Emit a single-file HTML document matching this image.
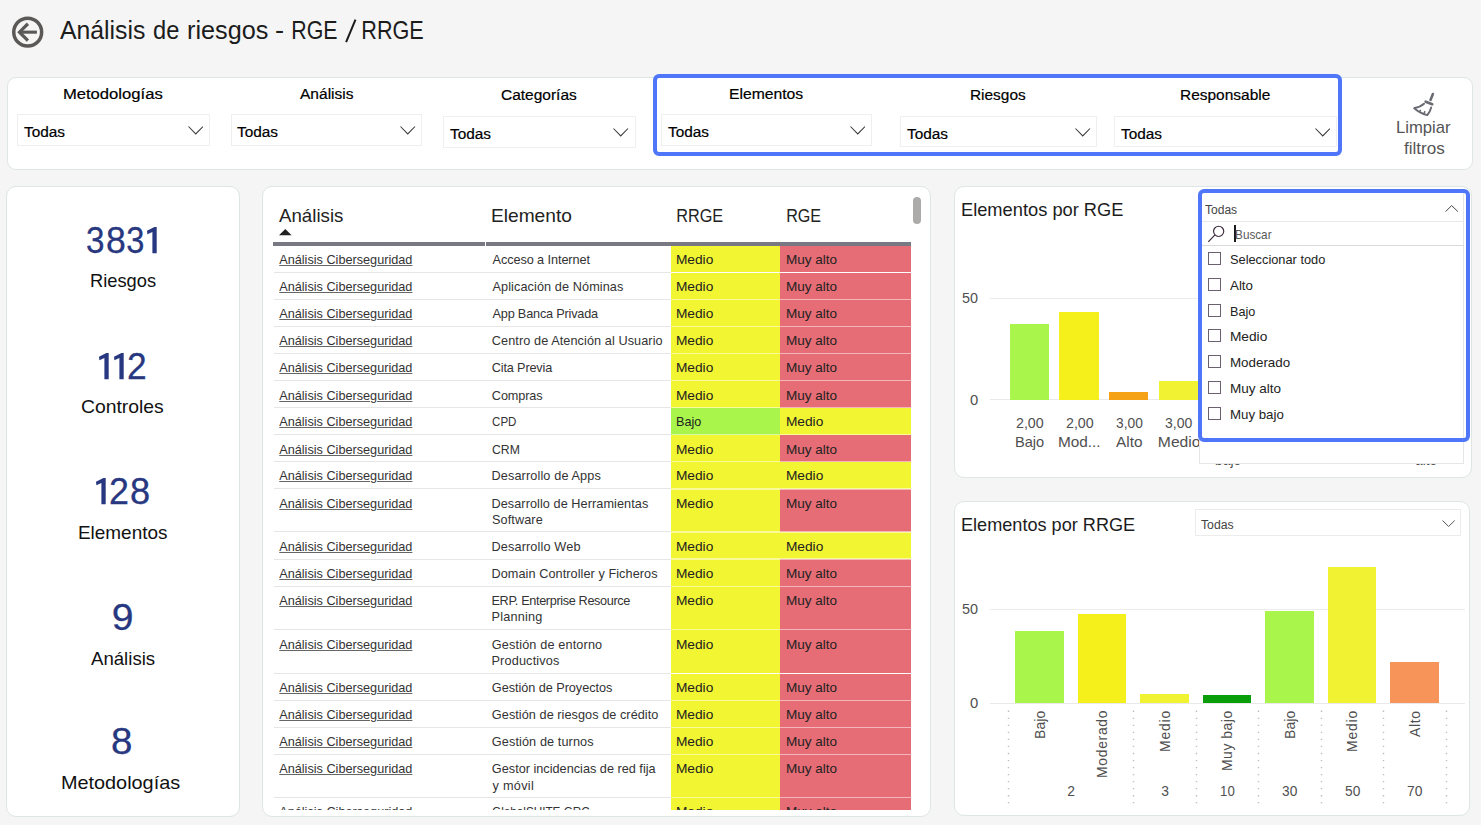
<!DOCTYPE html>
<html><head><meta charset="utf-8"><title>Análisis de riesgos</title>
<style>
html,body{margin:0;padding:0}
body{width:1481px;height:825px;overflow:hidden;background:#f5f5f5;font-family:"Liberation Sans",sans-serif;position:relative}
.t{position:absolute;line-height:1;white-space:nowrap}
.b{position:absolute;display:block}
</style></head><body>
<svg class="b" style="left:0px;top:0px" width="56" height="60" viewBox="0 0 56 60">
<circle cx="27.7" cy="32.15" r="13.95" fill="none" stroke="#5b5957" stroke-width="3.5"/>
<path d="M19.4 32.15H36.9" fill="none" stroke="#5b5957" stroke-width="3.1"/>
<path d="M27.9 23.75L19.5 32.15L27.9 40.55" fill="none" stroke="#5b5957" stroke-width="3.2" stroke-linejoin="miter"/>
</svg>
<span class="t" style="left:59.80px;top:18px;font-size:25.40px;color:#1c1c1c;transform-origin:0.00px 0;transform:scaleX(0.9756);">Análisis</span>
<span class="t" style="left:152.78px;top:18px;font-size:25.40px;color:#1c1c1c;transform-origin:1.02px 0;transform:scaleX(0.9327);">de</span>
<span class="t" style="left:186.75px;top:18px;font-size:25.40px;color:#1c1c1c;transform-origin:1.65px 0;transform:scaleX(0.9928);">riesgos</span>
<span class="t" style="left:275.36px;top:18px;font-size:25.40px;color:#1c1c1c;transform-origin:1.14px 0;transform:scaleX(1.0767);">-</span>
<span class="t" style="left:291.07px;top:18px;font-size:25.40px;color:#1c1c1c;transform-origin:2.03px 0;transform:scaleX(0.8413);">RGE</span>
<span class="t" style="left:360.87px;top:18px;font-size:25.40px;color:#1c1c1c;transform-origin:2.03px 0;transform:scaleX(0.8515);">RRGE</span>
<svg class="b" style="left:340px;top:15px" width="22" height="32"><line x1="6.1" y1="27.2" x2="15.5" y2="4.6" stroke="#1c1c1c" stroke-width="2"/></svg>
<div class="b" style="left:7.00px;top:77.00px;width:1466.00px;height:92.50px;background:#fff;border:1px solid #dde6e4;border-radius:9px;box-sizing:border-box"></div>
<span class="t" style="left:63.28px;top:86px;font-size:15.20px;color:#000;transform-origin:1.22px 0;transform:scaleX(1.0946);-webkit-text-stroke:0.2px #000;">Metodologías</span>
<span class="t" style="left:300.00px;top:86px;font-size:15.20px;color:#000;transform-origin:0.00px 0;transform:scaleX(1.0225);-webkit-text-stroke:0.2px #000;">Análisis</span>
<span class="t" style="left:501.24px;top:87px;font-size:15.20px;color:#000;transform-origin:0.76px 0;transform:scaleX(1.0200);-webkit-text-stroke:0.2px #000;">Categorías</span>
<span class="t" style="left:728.78px;top:86px;font-size:15.20px;color:#000;transform-origin:1.22px 0;transform:scaleX(1.0347);-webkit-text-stroke:0.2px #000;">Elementos</span>
<span class="t" style="left:969.78px;top:87px;font-size:15.20px;color:#000;transform-origin:1.22px 0;transform:scaleX(1.0150);-webkit-text-stroke:0.2px #000;">Riesgos</span>
<span class="t" style="left:1179.78px;top:87px;font-size:15.20px;color:#000;transform-origin:1.22px 0;transform:scaleX(1.0188);-webkit-text-stroke:0.2px #000;">Responsable</span>
<div class="b" style="left:17.00px;top:114.00px;width:192.50px;height:31.50px;border:1px solid #efefef;box-sizing:border-box;background:#fff"></div>
<span class="t" style="left:23.95px;top:124px;font-size:15.20px;color:#000;transform-origin:0.30px 0;transform:scaleX(1.0126);-webkit-text-stroke:0.2px #000;">Todas</span>
<svg class="b" style="left:187.50px;top:126.00px" width="15.50" height="8.50"><polyline points="0.5,0.5 7.75,7.90 15.00,0.5" fill="none" stroke="#3a3a3a" stroke-width="1.05"/></svg>
<div class="b" style="left:230.50px;top:114.00px;width:191.50px;height:31.50px;border:1px solid #efefef;box-sizing:border-box;background:#fff"></div>
<span class="t" style="left:237.20px;top:124px;font-size:15.20px;color:#000;transform-origin:0.30px 0;transform:scaleX(1.0126);-webkit-text-stroke:0.2px #000;">Todas</span>
<svg class="b" style="left:400.00px;top:126.00px" width="15.50" height="8.50"><polyline points="0.5,0.5 7.75,7.90 15.00,0.5" fill="none" stroke="#3a3a3a" stroke-width="1.05"/></svg>
<div class="b" style="left:443.25px;top:115.50px;width:192.25px;height:32.00px;border:1px solid #efefef;box-sizing:border-box;background:#fff"></div>
<span class="t" style="left:450.20px;top:126px;font-size:15.20px;color:#000;transform-origin:0.30px 0;transform:scaleX(1.0126);-webkit-text-stroke:0.2px #000;">Todas</span>
<svg class="b" style="left:613.00px;top:128.00px" width="15.50" height="8.50"><polyline points="0.5,0.5 7.75,7.90 15.00,0.5" fill="none" stroke="#3a3a3a" stroke-width="1.05"/></svg>
<div class="b" style="left:661.25px;top:114.00px;width:210.75px;height:31.50px;border:1px solid #efefef;box-sizing:border-box;background:#fff"></div>
<span class="t" style="left:667.70px;top:124px;font-size:15.20px;color:#000;transform-origin:0.30px 0;transform:scaleX(1.0126);-webkit-text-stroke:0.2px #000;">Todas</span>
<svg class="b" style="left:849.50px;top:126.00px" width="15.50" height="8.50"><polyline points="0.5,0.5 7.75,7.90 15.00,0.5" fill="none" stroke="#3a3a3a" stroke-width="1.05"/></svg>
<div class="b" style="left:899.50px;top:115.50px;width:197.25px;height:31.50px;border:1px solid #efefef;box-sizing:border-box;background:#fff"></div>
<span class="t" style="left:906.70px;top:126px;font-size:15.20px;color:#000;transform-origin:0.30px 0;transform:scaleX(1.0126);-webkit-text-stroke:0.2px #000;">Todas</span>
<svg class="b" style="left:1075.00px;top:128.00px" width="15.50" height="8.50"><polyline points="0.5,0.5 7.75,7.90 15.00,0.5" fill="none" stroke="#3a3a3a" stroke-width="1.05"/></svg>
<div class="b" style="left:1114.25px;top:115.50px;width:222.25px;height:31.50px;border:1px solid #efefef;box-sizing:border-box;background:#fff"></div>
<span class="t" style="left:1120.70px;top:126px;font-size:15.20px;color:#000;transform-origin:0.30px 0;transform:scaleX(1.0126);-webkit-text-stroke:0.2px #000;">Todas</span>
<svg class="b" style="left:1314.50px;top:128.00px" width="15.50" height="8.50"><polyline points="0.5,0.5 7.75,7.90 15.00,0.5" fill="none" stroke="#3a3a3a" stroke-width="1.05"/></svg>
<div class="b" style="left:652.50px;top:73.50px;width:689.00px;height:82.00px;border:4px solid #4f76f9;border-radius:6px;box-sizing:border-box"></div>
<span class="t" style="left:1396.34px;top:120px;font-size:15.70px;color:#555;transform-origin:1.26px 0;transform:scaleX(1.0619);">Limpiar</span>
<span class="t" style="left:1403.76px;top:141px;font-size:15.70px;color:#555;transform-origin:0.24px 0;transform:scaleX(1.0888);">filtros</span>
<svg class="b" style="left:1405px;top:86px" width="40" height="36" viewBox="0 0 40 36">
<g fill="none" stroke="#6a6a73" stroke-linecap="round" stroke-linejoin="round">
<path d="M27.9 8.0L25.5 13.9" stroke-width="2.6"/>
<path d="M20.7 15.7L27.2 18.2" stroke-width="2.7"/>
<path d="M19.0 17.7Q15.6 20.9 9.6 22.0" stroke-width="2.0"/>
<path d="M9.3 22.3Q14.6 27.3 22.3 29.2Q25.1 25.6 26.2 21.4" stroke-width="1.9"/>
<path d="M15.4 24.3L14.5 25.7M19.8 25.6L19.0 27.6" stroke-width="1.5"/>
</g></svg>
<div class="b" style="left:6.00px;top:186.00px;width:234.00px;height:630.50px;background:#fff;border:1px solid #dde6e4;border-radius:10px;box-sizing:border-box"></div>
<span class="t" style="left:85.75px;top:223px;font-size:36.30px;color:#283880;-webkit-text-stroke:0.3px #283880;transform-origin:1.45px 0;transform:scaleX(0.9163)">3</span>
<span class="t" style="left:105.55px;top:223px;font-size:36.30px;color:#283880;-webkit-text-stroke:0.3px #283880;transform-origin:1.45px 0;transform:scaleX(0.9801)">8</span>
<span class="t" style="left:125.95px;top:223px;font-size:36.30px;color:#283880;-webkit-text-stroke:0.3px #283880;transform-origin:1.45px 0;transform:scaleX(0.8989)">3</span>
<svg class="b" style="left:146.60px;top:226.65px" width="11" height="27"><polygon points="9.70,0.00 7.40,0.00 0.00,3.75 0.40,7.30 5.40,5.00 5.40,26.15 9.70,26.15" fill="#283880"/></svg>
<span class="t" style="left:89.51px;top:272px;font-size:18.60px;color:#111;transform-origin:1.49px 0;transform:scaleX(0.9831);">Riesgos</span>
<svg class="b" style="left:99.20px;top:352.75px" width="11" height="27"><polygon points="9.70,0.00 7.40,0.00 0.00,3.75 0.40,7.30 5.40,5.00 5.40,26.15 9.70,26.15" fill="#283880"/></svg>
<svg class="b" style="left:113.90px;top:352.75px" width="11" height="27"><polygon points="9.70,0.00 7.40,0.00 0.00,3.75 0.40,7.30 5.40,5.00 5.40,26.15 9.70,26.15" fill="#283880"/></svg>
<span class="t" style="left:127.28px;top:349px;font-size:36.30px;color:#283880;-webkit-text-stroke:0.3px #283880;transform-origin:1.81px 0;transform:scaleX(0.9748)">2</span>
<span class="t" style="left:81.47px;top:398px;font-size:18.60px;color:#111;transform-origin:0.93px 0;transform:scaleX(1.0407);">Controles</span>
<svg class="b" style="left:96.40px;top:478.25px" width="11" height="27"><polygon points="9.70,0.00 7.40,0.00 0.00,3.75 0.40,7.30 5.40,5.00 5.40,26.15 9.70,26.15" fill="#283880"/></svg>
<span class="t" style="left:109.48px;top:474px;font-size:36.30px;color:#283880;-webkit-text-stroke:0.3px #283880;transform-origin:1.81px 0;transform:scaleX(0.9869)">2</span>
<span class="t" style="left:129.95px;top:474px;font-size:36.30px;color:#283880;-webkit-text-stroke:0.3px #283880;transform-origin:1.45px 0;transform:scaleX(0.9975)">8</span>
<span class="t" style="left:77.91px;top:524px;font-size:18.60px;color:#111;transform-origin:1.49px 0;transform:scaleX(1.0181);">Elementos</span>
<span class="t" style="left:111.97px;top:600px;font-size:36.30px;color:#283880;-webkit-text-stroke:0.3px #283880;transform-origin:1.63px 0;transform:scaleX(1.0782)">9</span>
<span class="t" style="left:91.00px;top:650px;font-size:18.60px;color:#111;transform-origin:0.00px 0;transform:scaleX(1.0012);">Análisis</span>
<span class="t" style="left:110.55px;top:724px;font-size:36.30px;color:#283880;-webkit-text-stroke:0.3px #283880;transform-origin:1.45px 0;transform:scaleX(1.0613)">8</span>
<span class="t" style="left:61.21px;top:774px;font-size:18.60px;color:#111;transform-origin:1.49px 0;transform:scaleX(1.0680);">Metodologías</span>
<div class="b" style="left:261.50px;top:186.00px;width:669.50px;height:631.20px;background:#fff;border:1px solid #dde6e4;border-radius:10px;box-sizing:border-box"></div>
<span class="t" style="left:279.25px;top:207px;font-size:18.20px;color:#222;transform-origin:0.00px 0;transform:scaleX(1.0272);">Análisis</span>
<span class="t" style="left:491.04px;top:207px;font-size:18.20px;color:#222;transform-origin:1.46px 0;transform:scaleX(1.0541);">Elemento</span>
<span class="t" style="left:675.54px;top:207px;font-size:18.20px;color:#222;transform-origin:1.46px 0;transform:scaleX(0.8942);">RRGE</span>
<span class="t" style="left:786.04px;top:207px;font-size:18.20px;color:#222;transform-origin:1.46px 0;transform:scaleX(0.8866);">RGE</span>
<svg class="b" style="left:279px;top:228.5px" width="13" height="7"><polygon points="0,6.3 6.3,0 12.6,6.3" fill="#222"/></svg>
<div class="b" style="left:273.25px;top:242.40px;width:211.75px;height:3.40px;background:#797984"></div>
<div class="b" style="left:485.70px;top:242.40px;width:425.55px;height:3.40px;background:#797984"></div>
<div class="b" style="left:913.40px;top:197.00px;width:7.80px;height:27.25px;background:#acabaa;border-radius:4px"></div>
<div class="b" style="left:262px;top:0;width:669px;height:810px;overflow:hidden">
<div class="b" style="left:408.75px;top:245.80px;width:109.45px;height:26.70px;background:#f2f531"></div>
<div class="b" style="left:518.20px;top:245.80px;width:131.05px;height:26.70px;background:#e66c75"></div>
<span class="t" style="left:17.25px;top:254px;font-size:12.70px;color:#333;letter-spacing:-0.007px;text-decoration:underline;text-underline-offset:1px;text-decoration-thickness:1px;text-decoration-color:#666;text-decoration-skip-ink:auto;">Análisis Ciberseguridad</span>
<span class="t" style="left:230.50px;top:254px;font-size:12.70px;color:#333;letter-spacing:-0.078px;">Acceso a Internet</span>
<span class="t" style="left:414.23px;top:254px;font-size:12.70px;color:#222;transform-origin:1.02px 0;transform:scaleX(1.0806);">Medio</span>
<span class="t" style="left:524.23px;top:254px;font-size:12.70px;color:#222;transform-origin:1.02px 0;transform:scaleX(1.0649);">Muy alto</span>
<div class="b" style="left:408.75px;top:272.50px;width:109.45px;height:27.00px;background:#f2f531"></div>
<div class="b" style="left:518.20px;top:272.50px;width:131.05px;height:27.00px;background:#e66c75"></div>
<div class="b" style="left:12.00px;top:272.00px;width:396.75px;height:1.00px;background:#e6e6e6"></div>
<div class="b" style="left:408.75px;top:271.80px;width:240.50px;height:1.40px;background:rgba(255,255,255,0.5)"></div>
<span class="t" style="left:17.25px;top:281px;font-size:12.70px;color:#333;letter-spacing:-0.007px;text-decoration:underline;text-underline-offset:1px;text-decoration-thickness:1px;text-decoration-color:#666;text-decoration-skip-ink:auto;">Análisis Ciberseguridad</span>
<span class="t" style="left:230.50px;top:281px;font-size:12.70px;color:#333;letter-spacing:0.089px;">Aplicación de Nóminas</span>
<span class="t" style="left:414.23px;top:281px;font-size:12.70px;color:#222;transform-origin:1.02px 0;transform:scaleX(1.0806);">Medio</span>
<span class="t" style="left:524.23px;top:281px;font-size:12.70px;color:#222;transform-origin:1.02px 0;transform:scaleX(1.0649);">Muy alto</span>
<div class="b" style="left:408.75px;top:299.50px;width:109.45px;height:27.10px;background:#f2f531"></div>
<div class="b" style="left:518.20px;top:299.50px;width:131.05px;height:27.10px;background:#e66c75"></div>
<div class="b" style="left:12.00px;top:299.00px;width:396.75px;height:1.00px;background:#e6e6e6"></div>
<div class="b" style="left:408.75px;top:298.80px;width:240.50px;height:1.40px;background:rgba(255,255,255,0.5)"></div>
<span class="t" style="left:17.25px;top:308px;font-size:12.70px;color:#333;letter-spacing:-0.007px;text-decoration:underline;text-underline-offset:1px;text-decoration-thickness:1px;text-decoration-color:#666;text-decoration-skip-ink:auto;">Análisis Ciberseguridad</span>
<span class="t" style="left:230.50px;top:308px;font-size:12.70px;color:#333;letter-spacing:-0.185px;">App Banca Privada</span>
<span class="t" style="left:414.23px;top:308px;font-size:12.70px;color:#222;transform-origin:1.02px 0;transform:scaleX(1.0806);">Medio</span>
<span class="t" style="left:524.23px;top:308px;font-size:12.70px;color:#222;transform-origin:1.02px 0;transform:scaleX(1.0649);">Muy alto</span>
<div class="b" style="left:408.75px;top:326.60px;width:109.45px;height:27.00px;background:#f2f531"></div>
<div class="b" style="left:518.20px;top:326.60px;width:131.05px;height:27.00px;background:#e66c75"></div>
<div class="b" style="left:12.00px;top:326.10px;width:396.75px;height:1.00px;background:#e6e6e6"></div>
<div class="b" style="left:408.75px;top:325.90px;width:240.50px;height:1.40px;background:rgba(255,255,255,0.5)"></div>
<span class="t" style="left:17.25px;top:335px;font-size:12.70px;color:#333;letter-spacing:-0.007px;text-decoration:underline;text-underline-offset:1px;text-decoration-thickness:1px;text-decoration-color:#666;text-decoration-skip-ink:auto;">Análisis Ciberseguridad</span>
<span class="t" style="left:229.87px;top:335px;font-size:12.70px;color:#333;letter-spacing:0.078px;">Centro de Atención al Usuario</span>
<span class="t" style="left:414.23px;top:335px;font-size:12.70px;color:#222;transform-origin:1.02px 0;transform:scaleX(1.0806);">Medio</span>
<span class="t" style="left:524.23px;top:335px;font-size:12.70px;color:#222;transform-origin:1.02px 0;transform:scaleX(1.0649);">Muy alto</span>
<div class="b" style="left:408.75px;top:353.60px;width:109.45px;height:27.10px;background:#f2f531"></div>
<div class="b" style="left:518.20px;top:353.60px;width:131.05px;height:27.10px;background:#e66c75"></div>
<div class="b" style="left:12.00px;top:353.10px;width:396.75px;height:1.00px;background:#e6e6e6"></div>
<div class="b" style="left:408.75px;top:352.90px;width:240.50px;height:1.40px;background:rgba(255,255,255,0.5)"></div>
<span class="t" style="left:17.25px;top:362px;font-size:12.70px;color:#333;letter-spacing:-0.007px;text-decoration:underline;text-underline-offset:1px;text-decoration-thickness:1px;text-decoration-color:#666;text-decoration-skip-ink:auto;">Análisis Ciberseguridad</span>
<span class="t" style="left:229.87px;top:362px;font-size:12.70px;color:#333;letter-spacing:-0.172px;">Cita Previa</span>
<span class="t" style="left:414.23px;top:362px;font-size:12.70px;color:#222;transform-origin:1.02px 0;transform:scaleX(1.0806);">Medio</span>
<span class="t" style="left:524.23px;top:362px;font-size:12.70px;color:#222;transform-origin:1.02px 0;transform:scaleX(1.0649);">Muy alto</span>
<div class="b" style="left:408.75px;top:380.70px;width:109.45px;height:26.90px;background:#f2f531"></div>
<div class="b" style="left:518.20px;top:380.70px;width:131.05px;height:26.90px;background:#e66c75"></div>
<div class="b" style="left:12.00px;top:380.20px;width:396.75px;height:1.00px;background:#e6e6e6"></div>
<div class="b" style="left:408.75px;top:380.00px;width:240.50px;height:1.40px;background:rgba(255,255,255,0.5)"></div>
<span class="t" style="left:17.25px;top:390px;font-size:12.70px;color:#333;letter-spacing:-0.007px;text-decoration:underline;text-underline-offset:1px;text-decoration-thickness:1px;text-decoration-color:#666;text-decoration-skip-ink:auto;">Análisis Ciberseguridad</span>
<span class="t" style="left:229.87px;top:390px;font-size:12.70px;color:#333;letter-spacing:-0.112px;">Compras</span>
<span class="t" style="left:414.23px;top:390px;font-size:12.70px;color:#222;transform-origin:1.02px 0;transform:scaleX(1.0806);">Medio</span>
<span class="t" style="left:524.23px;top:390px;font-size:12.70px;color:#222;transform-origin:1.02px 0;transform:scaleX(1.0649);">Muy alto</span>
<div class="b" style="left:408.75px;top:407.60px;width:109.45px;height:27.20px;background:#a9f54c"></div>
<div class="b" style="left:518.20px;top:407.60px;width:131.05px;height:27.20px;background:#f2f531"></div>
<div class="b" style="left:12.00px;top:407.10px;width:396.75px;height:1.00px;background:#e6e6e6"></div>
<div class="b" style="left:408.75px;top:406.90px;width:240.50px;height:1.40px;background:rgba(255,255,255,0.5)"></div>
<span class="t" style="left:17.25px;top:416px;font-size:12.70px;color:#333;letter-spacing:-0.007px;text-decoration:underline;text-underline-offset:1px;text-decoration-thickness:1px;text-decoration-color:#666;text-decoration-skip-ink:auto;">Análisis Ciberseguridad</span>
<span class="t" style="left:229.87px;top:416px;font-size:12.70px;color:#333;transform-origin:0.64px 0;transform:scaleX(0.9085);">CPD</span>
<span class="t" style="left:414.23px;top:416px;font-size:12.70px;color:#222;transform-origin:1.02px 0;transform:scaleX(0.9947);">Bajo</span>
<span class="t" style="left:524.23px;top:416px;font-size:12.70px;color:#222;transform-origin:1.02px 0;transform:scaleX(1.0806);">Medio</span>
<div class="b" style="left:408.75px;top:434.80px;width:109.45px;height:27.00px;background:#f2f531"></div>
<div class="b" style="left:518.20px;top:434.80px;width:131.05px;height:27.00px;background:#e66c75"></div>
<div class="b" style="left:12.00px;top:434.30px;width:396.75px;height:1.00px;background:#e6e6e6"></div>
<div class="b" style="left:408.75px;top:434.10px;width:240.50px;height:1.40px;background:rgba(255,255,255,0.5)"></div>
<span class="t" style="left:17.25px;top:444px;font-size:12.70px;color:#333;letter-spacing:-0.007px;text-decoration:underline;text-underline-offset:1px;text-decoration-thickness:1px;text-decoration-color:#666;text-decoration-skip-ink:auto;">Análisis Ciberseguridad</span>
<span class="t" style="left:229.87px;top:444px;font-size:12.70px;color:#333;transform-origin:0.64px 0;transform:scaleX(0.9636);">CRM</span>
<span class="t" style="left:414.23px;top:444px;font-size:12.70px;color:#222;transform-origin:1.02px 0;transform:scaleX(1.0806);">Medio</span>
<span class="t" style="left:524.23px;top:444px;font-size:12.70px;color:#222;transform-origin:1.02px 0;transform:scaleX(1.0649);">Muy alto</span>
<div class="b" style="left:408.75px;top:461.80px;width:109.45px;height:27.10px;background:#f2f531"></div>
<div class="b" style="left:518.20px;top:461.80px;width:131.05px;height:27.10px;background:#f2f531"></div>
<div class="b" style="left:12.00px;top:461.30px;width:396.75px;height:1.00px;background:#e6e6e6"></div>
<div class="b" style="left:408.75px;top:461.10px;width:240.50px;height:1.40px;background:rgba(255,255,255,0.5)"></div>
<span class="t" style="left:17.25px;top:470px;font-size:12.70px;color:#333;letter-spacing:-0.007px;text-decoration:underline;text-underline-offset:1px;text-decoration-thickness:1px;text-decoration-color:#666;text-decoration-skip-ink:auto;">Análisis Ciberseguridad</span>
<span class="t" style="left:229.48px;top:470px;font-size:12.70px;color:#333;letter-spacing:0.126px;">Desarrollo de Apps</span>
<span class="t" style="left:414.23px;top:470px;font-size:12.70px;color:#222;transform-origin:1.02px 0;transform:scaleX(1.0806);">Medio</span>
<span class="t" style="left:524.23px;top:470px;font-size:12.70px;color:#222;transform-origin:1.02px 0;transform:scaleX(1.0806);">Medio</span>
<div class="b" style="left:408.75px;top:488.90px;width:109.45px;height:43.00px;background:#f2f531"></div>
<div class="b" style="left:518.20px;top:488.90px;width:131.05px;height:43.00px;background:#e66c75"></div>
<div class="b" style="left:12.00px;top:488.40px;width:396.75px;height:1.00px;background:#e6e6e6"></div>
<div class="b" style="left:408.75px;top:488.20px;width:240.50px;height:1.40px;background:rgba(255,255,255,0.5)"></div>
<span class="t" style="left:17.25px;top:498px;font-size:12.70px;color:#333;letter-spacing:-0.007px;text-decoration:underline;text-underline-offset:1px;text-decoration-thickness:1px;text-decoration-color:#666;text-decoration-skip-ink:auto;">Análisis Ciberseguridad</span>
<span class="t" style="left:229.48px;top:498px;font-size:12.70px;color:#333;letter-spacing:0.066px;">Desarrollo de Herramientas</span>
<span class="t" style="left:229.93px;top:514px;font-size:12.70px;color:#333;letter-spacing:0.104px;">Software</span>
<span class="t" style="left:414.23px;top:498px;font-size:12.70px;color:#222;transform-origin:1.02px 0;transform:scaleX(1.0806);">Medio</span>
<span class="t" style="left:524.23px;top:498px;font-size:12.70px;color:#222;transform-origin:1.02px 0;transform:scaleX(1.0649);">Muy alto</span>
<div class="b" style="left:408.75px;top:531.90px;width:109.45px;height:27.20px;background:#f2f531"></div>
<div class="b" style="left:518.20px;top:531.90px;width:131.05px;height:27.20px;background:#f2f531"></div>
<div class="b" style="left:12.00px;top:531.40px;width:396.75px;height:1.00px;background:#e6e6e6"></div>
<div class="b" style="left:408.75px;top:531.20px;width:240.50px;height:1.40px;background:rgba(255,255,255,0.5)"></div>
<span class="t" style="left:17.25px;top:541px;font-size:12.70px;color:#333;letter-spacing:-0.007px;text-decoration:underline;text-underline-offset:1px;text-decoration-thickness:1px;text-decoration-color:#666;text-decoration-skip-ink:auto;">Análisis Ciberseguridad</span>
<span class="t" style="left:229.48px;top:541px;font-size:12.70px;color:#333;letter-spacing:0.137px;">Desarrollo Web</span>
<span class="t" style="left:414.23px;top:541px;font-size:12.70px;color:#222;transform-origin:1.02px 0;transform:scaleX(1.0806);">Medio</span>
<span class="t" style="left:524.23px;top:541px;font-size:12.70px;color:#222;transform-origin:1.02px 0;transform:scaleX(1.0806);">Medio</span>
<div class="b" style="left:408.75px;top:559.10px;width:109.45px;height:27.20px;background:#f2f531"></div>
<div class="b" style="left:518.20px;top:559.10px;width:131.05px;height:27.20px;background:#e66c75"></div>
<div class="b" style="left:12.00px;top:558.60px;width:396.75px;height:1.00px;background:#e6e6e6"></div>
<div class="b" style="left:408.75px;top:558.40px;width:240.50px;height:1.40px;background:rgba(255,255,255,0.5)"></div>
<span class="t" style="left:17.25px;top:568px;font-size:12.70px;color:#333;letter-spacing:-0.007px;text-decoration:underline;text-underline-offset:1px;text-decoration-thickness:1px;text-decoration-color:#666;text-decoration-skip-ink:auto;">Análisis Ciberseguridad</span>
<span class="t" style="left:229.48px;top:568px;font-size:12.70px;color:#333;letter-spacing:0.065px;">Domain Controller y Ficheros</span>
<span class="t" style="left:414.23px;top:568px;font-size:12.70px;color:#222;transform-origin:1.02px 0;transform:scaleX(1.0806);">Medio</span>
<span class="t" style="left:524.23px;top:568px;font-size:12.70px;color:#222;transform-origin:1.02px 0;transform:scaleX(1.0649);">Muy alto</span>
<div class="b" style="left:408.75px;top:586.30px;width:109.45px;height:43.50px;background:#f2f531"></div>
<div class="b" style="left:518.20px;top:586.30px;width:131.05px;height:43.50px;background:#e66c75"></div>
<div class="b" style="left:12.00px;top:585.80px;width:396.75px;height:1.00px;background:#e6e6e6"></div>
<div class="b" style="left:408.75px;top:585.60px;width:240.50px;height:1.40px;background:rgba(255,255,255,0.5)"></div>
<span class="t" style="left:17.25px;top:595px;font-size:12.70px;color:#333;letter-spacing:-0.007px;text-decoration:underline;text-underline-offset:1px;text-decoration-thickness:1px;text-decoration-color:#666;text-decoration-skip-ink:auto;">Análisis Ciberseguridad</span>
<span class="t" style="left:229.48px;top:595px;font-size:12.70px;color:#333;letter-spacing:-0.358px;">ERP. Enterprise Resource</span>
<span class="t" style="left:229.48px;top:611px;font-size:12.70px;color:#333;letter-spacing:0.196px;">Planning</span>
<span class="t" style="left:414.23px;top:595px;font-size:12.70px;color:#222;transform-origin:1.02px 0;transform:scaleX(1.0806);">Medio</span>
<span class="t" style="left:524.23px;top:595px;font-size:12.70px;color:#222;transform-origin:1.02px 0;transform:scaleX(1.0649);">Muy alto</span>
<div class="b" style="left:408.75px;top:629.80px;width:109.45px;height:43.70px;background:#f2f531"></div>
<div class="b" style="left:518.20px;top:629.80px;width:131.05px;height:43.70px;background:#e66c75"></div>
<div class="b" style="left:12.00px;top:629.30px;width:396.75px;height:1.00px;background:#e6e6e6"></div>
<div class="b" style="left:408.75px;top:629.10px;width:240.50px;height:1.40px;background:rgba(255,255,255,0.5)"></div>
<span class="t" style="left:17.25px;top:639px;font-size:12.70px;color:#333;letter-spacing:-0.007px;text-decoration:underline;text-underline-offset:1px;text-decoration-thickness:1px;text-decoration-color:#666;text-decoration-skip-ink:auto;">Análisis Ciberseguridad</span>
<span class="t" style="left:229.87px;top:639px;font-size:12.70px;color:#333;letter-spacing:0.140px;">Gestión de entorno</span>
<span class="t" style="left:229.48px;top:655px;font-size:12.70px;color:#333;letter-spacing:0.160px;">Productivos</span>
<span class="t" style="left:414.23px;top:639px;font-size:12.70px;color:#222;transform-origin:1.02px 0;transform:scaleX(1.0806);">Medio</span>
<span class="t" style="left:524.23px;top:639px;font-size:12.70px;color:#222;transform-origin:1.02px 0;transform:scaleX(1.0649);">Muy alto</span>
<div class="b" style="left:408.75px;top:673.50px;width:109.45px;height:27.00px;background:#f2f531"></div>
<div class="b" style="left:518.20px;top:673.50px;width:131.05px;height:27.00px;background:#e66c75"></div>
<div class="b" style="left:12.00px;top:673.00px;width:396.75px;height:1.00px;background:#e6e6e6"></div>
<div class="b" style="left:408.75px;top:672.80px;width:240.50px;height:1.40px;background:rgba(255,255,255,0.5)"></div>
<span class="t" style="left:17.25px;top:682px;font-size:12.70px;color:#333;letter-spacing:-0.007px;text-decoration:underline;text-underline-offset:1px;text-decoration-thickness:1px;text-decoration-color:#666;text-decoration-skip-ink:auto;">Análisis Ciberseguridad</span>
<span class="t" style="left:229.87px;top:682px;font-size:12.70px;color:#333;letter-spacing:-0.044px;">Gestión de Proyectos</span>
<span class="t" style="left:414.23px;top:682px;font-size:12.70px;color:#222;transform-origin:1.02px 0;transform:scaleX(1.0806);">Medio</span>
<span class="t" style="left:524.23px;top:682px;font-size:12.70px;color:#222;transform-origin:1.02px 0;transform:scaleX(1.0649);">Muy alto</span>
<div class="b" style="left:408.75px;top:700.50px;width:109.45px;height:26.90px;background:#f2f531"></div>
<div class="b" style="left:518.20px;top:700.50px;width:131.05px;height:26.90px;background:#e66c75"></div>
<div class="b" style="left:12.00px;top:700.00px;width:396.75px;height:1.00px;background:#e6e6e6"></div>
<div class="b" style="left:408.75px;top:699.80px;width:240.50px;height:1.40px;background:rgba(255,255,255,0.5)"></div>
<span class="t" style="left:17.25px;top:709px;font-size:12.70px;color:#333;letter-spacing:-0.007px;text-decoration:underline;text-underline-offset:1px;text-decoration-thickness:1px;text-decoration-color:#666;text-decoration-skip-ink:auto;">Análisis Ciberseguridad</span>
<span class="t" style="left:229.87px;top:709px;font-size:12.70px;color:#333;letter-spacing:0.053px;">Gestión de riesgos de crédito</span>
<span class="t" style="left:414.23px;top:709px;font-size:12.70px;color:#222;transform-origin:1.02px 0;transform:scaleX(1.0806);">Medio</span>
<span class="t" style="left:524.23px;top:709px;font-size:12.70px;color:#222;transform-origin:1.02px 0;transform:scaleX(1.0649);">Muy alto</span>
<div class="b" style="left:408.75px;top:727.40px;width:109.45px;height:27.20px;background:#f2f531"></div>
<div class="b" style="left:518.20px;top:727.40px;width:131.05px;height:27.20px;background:#e66c75"></div>
<div class="b" style="left:12.00px;top:726.90px;width:396.75px;height:1.00px;background:#e6e6e6"></div>
<div class="b" style="left:408.75px;top:726.70px;width:240.50px;height:1.40px;background:rgba(255,255,255,0.5)"></div>
<span class="t" style="left:17.25px;top:736px;font-size:12.70px;color:#333;letter-spacing:-0.007px;text-decoration:underline;text-underline-offset:1px;text-decoration-thickness:1px;text-decoration-color:#666;text-decoration-skip-ink:auto;">Análisis Ciberseguridad</span>
<span class="t" style="left:229.87px;top:736px;font-size:12.70px;color:#333;letter-spacing:0.098px;">Gestión de turnos</span>
<span class="t" style="left:414.23px;top:736px;font-size:12.70px;color:#222;transform-origin:1.02px 0;transform:scaleX(1.0806);">Medio</span>
<span class="t" style="left:524.23px;top:736px;font-size:12.70px;color:#222;transform-origin:1.02px 0;transform:scaleX(1.0649);">Muy alto</span>
<div class="b" style="left:408.75px;top:754.60px;width:109.45px;height:43.10px;background:#f2f531"></div>
<div class="b" style="left:518.20px;top:754.60px;width:131.05px;height:43.10px;background:#e66c75"></div>
<div class="b" style="left:12.00px;top:754.10px;width:396.75px;height:1.00px;background:#e6e6e6"></div>
<div class="b" style="left:408.75px;top:753.90px;width:240.50px;height:1.40px;background:rgba(255,255,255,0.5)"></div>
<span class="t" style="left:17.25px;top:763px;font-size:12.70px;color:#333;letter-spacing:-0.007px;text-decoration:underline;text-underline-offset:1px;text-decoration-thickness:1px;text-decoration-color:#666;text-decoration-skip-ink:auto;">Análisis Ciberseguridad</span>
<span class="t" style="left:229.87px;top:763px;font-size:12.70px;color:#333;letter-spacing:0.004px;">Gestor incidencias de red fija</span>
<span class="t" style="left:230.50px;top:780px;font-size:12.70px;color:#333;letter-spacing:0.305px;">y móvil</span>
<span class="t" style="left:414.23px;top:763px;font-size:12.70px;color:#222;transform-origin:1.02px 0;transform:scaleX(1.0806);">Medio</span>
<span class="t" style="left:524.23px;top:763px;font-size:12.70px;color:#222;transform-origin:1.02px 0;transform:scaleX(1.0649);">Muy alto</span>
<div class="b" style="left:408.75px;top:797.70px;width:109.45px;height:27.00px;background:#f2f531"></div>
<div class="b" style="left:518.20px;top:797.70px;width:131.05px;height:27.00px;background:#e66c75"></div>
<div class="b" style="left:12.00px;top:797.20px;width:396.75px;height:1.00px;background:#e6e6e6"></div>
<div class="b" style="left:408.75px;top:797.00px;width:240.50px;height:1.40px;background:rgba(255,255,255,0.5)"></div>
<span class="t" style="left:17.25px;top:806px;font-size:12.70px;color:#333;letter-spacing:-0.007px;text-decoration:underline;text-underline-offset:1px;text-decoration-thickness:1px;text-decoration-color:#666;text-decoration-skip-ink:auto;">Análisis Ciberseguridad</span>
<span class="t" style="left:229.87px;top:806px;font-size:12.70px;color:#333;transform-origin:0.64px 0;transform:scaleX(0.9234);">GlobalSUITE GRC</span>
<span class="t" style="left:414.23px;top:806px;font-size:12.70px;color:#222;transform-origin:1.02px 0;transform:scaleX(1.0806);">Medio</span>
<span class="t" style="left:524.23px;top:806px;font-size:12.70px;color:#222;transform-origin:1.02px 0;transform:scaleX(1.0649);">Muy alto</span>
</div>
<div class="b" style="left:954.00px;top:186.00px;width:517.50px;height:291.50px;background:#fff;border:1px solid #dde6e4;border-radius:10px;box-sizing:border-box"></div>
<span class="t" style="left:961.38px;top:202px;font-size:17.70px;color:#1c1c1c;transform-origin:1.42px 0;transform:scaleX(1.0333);">Elementos por RGE</span>
<span class="t" style="left:962.24px;top:292px;font-size:13.90px;color:#505050;transform-origin:0.56px 0;transform:scaleX(1.0357);">50</span>
<span class="t" style="left:970.04px;top:394px;font-size:13.90px;color:#505050;transform-origin:0.56px 0;transform:scaleX(1.0641);">0</span>
<div class="b" style="left:989.70px;top:298.00px;width:208.30px;height:1.00px;background:#ececec"></div>
<div class="b" style="left:989.70px;top:399.30px;width:208.30px;height:1.00px;background:#e9e9e9"></div>
<div class="b" style="left:1009.80px;top:324.40px;width:39.20px;height:75.30px;background:#a9f54c"></div>
<div class="b" style="left:1059.40px;top:312.20px;width:39.40px;height:87.50px;background:#f5f01c"></div>
<div class="b" style="left:1109.20px;top:391.50px;width:39.20px;height:8.20px;background:#f5a216"></div>
<div class="b" style="left:1159.10px;top:381.30px;width:39.30px;height:18.40px;background:#f1f232"></div>
<span class="t" style="left:1015.80px;top:417px;font-size:13.90px;color:#505050;transform-origin:0.70px 0;transform:scaleX(1.0250);">2,00</span>
<span class="t" style="left:1014.89px;top:436px;font-size:13.90px;color:#505050;transform-origin:1.11px 0;transform:scaleX(1.0523);">Bajo</span>
<span class="t" style="left:1065.51px;top:417px;font-size:13.90px;color:#505050;transform-origin:0.70px 0;transform:scaleX(1.0250);">2,00</span>
<span class="t" style="left:1058.29px;top:436px;font-size:13.90px;color:#505050;transform-origin:1.11px 0;transform:scaleX(1.1053);">Mod...</span>
<span class="t" style="left:1115.64px;top:417px;font-size:13.90px;color:#505050;transform-origin:0.56px 0;transform:scaleX(0.9926);">3,00</span>
<span class="t" style="left:1116.20px;top:436px;font-size:13.90px;color:#505050;transform-origin:0.00px 0;transform:scaleX(1.1048);">Alto</span>
<span class="t" style="left:1165.24px;top:417px;font-size:13.90px;color:#505050;transform-origin:0.56px 0;transform:scaleX(1.0080);">3,00</span>
<span class="t" style="left:1157.94px;top:436px;font-size:13.90px;color:#505050;transform-origin:1.11px 0;transform:scaleX(1.1268);">Medio</span>
<span class="t" style="left:1215.10px;top:454px;font-size:13.90px;color:#505050;transform-origin:0.90px 0;transform:scaleX(0.9995);">bajo</span>
<span class="t" style="left:1414.94px;top:454px;font-size:13.90px;color:#505050;transform-origin:0.56px 0;transform:scaleX(0.9874);">alto</span>
<div class="b" style="left:1198.50px;top:192.00px;width:265.50px;height:271.50px;background:#fff;border:1px solid #e6e6e6;box-sizing:border-box"></div>
<div class="b" style="left:1202.00px;top:221.20px;width:261.50px;height:1.00px;background:#e9e9e9"></div>
<div class="b" style="left:1202.00px;top:244.90px;width:261.50px;height:1.00px;background:#d9d9d9"></div>
<span class="t" style="left:1205.06px;top:204px;font-size:12.00px;color:#444;transform-origin:0.24px 0;transform:scaleX(1.0038);">Todas</span>
<svg class="b" style="left:1444.80px;top:204.90px" width="13.40" height="7.10"><polyline points="0.5,6.60 6.70,0.6 12.90,6.60" fill="none" stroke="#444" stroke-width="1.00"/></svg>
<svg class="b" style="left:1204px;top:222px" width="24" height="24" viewBox="0 0 24 24">
<circle cx="14.65" cy="9.35" r="5.1" fill="none" stroke="#3a2a3a" stroke-width="1.15"/><path d="M10.9 12.9L4.3 19.8" stroke="#3a2a3a" stroke-width="1.2"/></svg>
<div class="b" style="left:1234.00px;top:225.40px;width:1.60px;height:16.40px;background:#1a1a1a"></div>
<span class="t" style="left:1234.58px;top:229px;font-size:12.70px;color:#5a5a5a;transform-origin:1.02px 0;transform:scaleX(0.9230);">Buscar</span>
<div class="b" style="left:1208.00px;top:252.20px;width:13.00px;height:12.70px;border:1px solid #6a6070;box-sizing:border-box;background:#fff"></div>
<span class="t" style="left:1229.73px;top:254px;font-size:12.70px;color:#222;transform-origin:0.57px 0;transform:scaleX(1.0082);">Seleccionar todo</span>
<div class="b" style="left:1208.00px;top:278.20px;width:13.00px;height:12.70px;border:1px solid #6a6070;box-sizing:border-box;background:#fff"></div>
<span class="t" style="left:1230.30px;top:280px;font-size:12.70px;color:#222;transform-origin:0.00px 0;transform:scaleX(1.0499);">Alto</span>
<div class="b" style="left:1208.00px;top:304.20px;width:13.00px;height:12.70px;border:1px solid #6a6070;box-sizing:border-box;background:#fff"></div>
<span class="t" style="left:1229.78px;top:306px;font-size:12.70px;color:#222;transform-origin:1.02px 0;transform:scaleX(0.9947);">Bajo</span>
<div class="b" style="left:1208.00px;top:329.30px;width:13.00px;height:12.70px;border:1px solid #6a6070;box-sizing:border-box;background:#fff"></div>
<span class="t" style="left:1229.78px;top:331px;font-size:12.70px;color:#222;transform-origin:1.02px 0;transform:scaleX(1.0806);">Medio</span>
<div class="b" style="left:1208.00px;top:355.30px;width:13.00px;height:12.70px;border:1px solid #6a6070;box-sizing:border-box;background:#fff"></div>
<span class="t" style="left:1229.78px;top:357px;font-size:12.70px;color:#222;transform-origin:1.02px 0;transform:scaleX(1.0535);">Moderado</span>
<div class="b" style="left:1208.00px;top:381.30px;width:13.00px;height:12.70px;border:1px solid #6a6070;box-sizing:border-box;background:#fff"></div>
<span class="t" style="left:1229.78px;top:383px;font-size:12.70px;color:#222;transform-origin:1.02px 0;transform:scaleX(1.0649);">Muy alto</span>
<div class="b" style="left:1208.00px;top:407.30px;width:13.00px;height:12.70px;border:1px solid #6a6070;box-sizing:border-box;background:#fff"></div>
<span class="t" style="left:1229.78px;top:409px;font-size:12.70px;color:#222;transform-origin:1.02px 0;transform:scaleX(1.0465);">Muy bajo</span>
<div class="b" style="left:1198.00px;top:188.50px;width:272.00px;height:253.00px;border:4px solid #4f76f9;border-radius:6px;box-sizing:border-box"></div>
<div class="b" style="left:954.00px;top:501.20px;width:516.30px;height:315.10px;background:#fff;border:1px solid #dde6e4;border-radius:10px;box-sizing:border-box"></div>
<span class="t" style="left:961.38px;top:517px;font-size:17.70px;color:#1c1c1c;transform-origin:1.42px 0;transform:scaleX(1.0246);">Elementos por RRGE</span>
<div class="b" style="left:1194.80px;top:509.10px;width:266.20px;height:27.30px;border:1px solid #ececec;box-sizing:border-box;background:#fff"></div>
<span class="t" style="left:1201.46px;top:519px;font-size:12.00px;color:#444;transform-origin:0.24px 0;transform:scaleX(1.0198);">Todas</span>
<svg class="b" style="left:1442.20px;top:520.10px" width="13.20" height="7.10"><polyline points="0.5,0.5 6.60,6.50 12.70,0.5" fill="none" stroke="#555" stroke-width="1.00"/></svg>
<span class="t" style="left:962.24px;top:603px;font-size:13.90px;color:#505050;transform-origin:0.56px 0;transform:scaleX(1.0357);">50</span>
<span class="t" style="left:970.04px;top:697px;font-size:13.90px;color:#505050;transform-origin:0.56px 0;transform:scaleX(1.0641);">0</span>
<div class="b" style="left:989.70px;top:608.80px;width:475.60px;height:1.00px;background:#ececec"></div>
<div class="b" style="left:989.70px;top:703.10px;width:475.60px;height:1.00px;background:#e9e9e9"></div>
<div class="b" style="left:1015.00px;top:631.20px;width:48.80px;height:72.30px;background:#a9f54c"></div>
<span class="t" style="left:1033.70px;top:738.61px;font-size:13.90px;color:#505050;letter-spacing:0.123px;transform-origin:0 0;transform:rotate(-90deg)">Bajo</span>
<div class="b" style="left:1077.53px;top:614.40px;width:48.80px;height:89.10px;background:#f5f01c"></div>
<span class="t" style="left:1096.23px;top:777.91px;font-size:13.90px;color:#505050;letter-spacing:0.703px;transform-origin:0 0;transform:rotate(-90deg)">Moderado</span>
<div class="b" style="left:1140.06px;top:693.80px;width:48.80px;height:9.70px;background:#f1f232"></div>
<span class="t" style="left:1158.76px;top:751.71px;font-size:13.90px;color:#505050;letter-spacing:0.848px;transform-origin:0 0;transform:rotate(-90deg)">Medio</span>
<div class="b" style="left:1202.59px;top:695.40px;width:48.80px;height:8.10px;background:#0a9e0a"></div>
<span class="t" style="left:1221.29px;top:770.61px;font-size:13.90px;color:#505050;letter-spacing:0.543px;transform-origin:0 0;transform:rotate(-90deg)">Muy bajo</span>
<div class="b" style="left:1265.12px;top:610.70px;width:48.80px;height:92.80px;background:#a9f54c"></div>
<span class="t" style="left:1283.82px;top:738.61px;font-size:13.90px;color:#505050;letter-spacing:0.123px;transform-origin:0 0;transform:rotate(-90deg)">Bajo</span>
<div class="b" style="left:1327.65px;top:567.20px;width:48.80px;height:136.30px;background:#f1f232"></div>
<span class="t" style="left:1346.35px;top:751.71px;font-size:13.90px;color:#505050;letter-spacing:0.848px;transform-origin:0 0;transform:rotate(-90deg)">Medio</span>
<div class="b" style="left:1390.18px;top:661.60px;width:48.80px;height:41.90px;background:#f79459"></div>
<span class="t" style="left:1408.88px;top:736.50px;font-size:13.90px;color:#505050;letter-spacing:0.716px;transform-origin:0 0;transform:rotate(-90deg)">Alto</span>
<svg class="b" style="left:1007.00px;top:709px" width="3" height="96"><line x1="1.5" y1="1.6" x2="1.5" y2="94.2" stroke="#bdbdbd" stroke-width="1.4" stroke-dasharray="1.3 5.74"/></svg>
<svg class="b" style="left:1132.40px;top:709px" width="3" height="96"><line x1="1.5" y1="1.6" x2="1.5" y2="94.2" stroke="#bdbdbd" stroke-width="1.4" stroke-dasharray="1.3 5.74"/></svg>
<svg class="b" style="left:1194.80px;top:709px" width="3" height="96"><line x1="1.5" y1="1.6" x2="1.5" y2="94.2" stroke="#bdbdbd" stroke-width="1.4" stroke-dasharray="1.3 5.74"/></svg>
<svg class="b" style="left:1257.30px;top:709px" width="3" height="96"><line x1="1.5" y1="1.6" x2="1.5" y2="94.2" stroke="#bdbdbd" stroke-width="1.4" stroke-dasharray="1.3 5.74"/></svg>
<svg class="b" style="left:1319.80px;top:709px" width="3" height="96"><line x1="1.5" y1="1.6" x2="1.5" y2="94.2" stroke="#bdbdbd" stroke-width="1.4" stroke-dasharray="1.3 5.74"/></svg>
<svg class="b" style="left:1382.40px;top:709px" width="3" height="96"><line x1="1.5" y1="1.6" x2="1.5" y2="94.2" stroke="#bdbdbd" stroke-width="1.4" stroke-dasharray="1.3 5.74"/></svg>
<svg class="b" style="left:1444.90px;top:709px" width="3" height="96"><line x1="1.5" y1="1.6" x2="1.5" y2="94.2" stroke="#bdbdbd" stroke-width="1.4" stroke-dasharray="1.3 5.74"/></svg>
<span class="t" style="left:1067.34px;top:785px;font-size:13.90px;color:#505050;letter-spacing:0.000px;">2</span>
<span class="t" style="left:1161.14px;top:785px;font-size:13.90px;color:#505050;letter-spacing:0.000px;">3</span>
<span class="t" style="left:1219.96px;top:785px;font-size:13.90px;color:#505050;transform-origin:1.04px 0;transform:scaleX(0.9496);">10</span>
<span class="t" style="left:1282.34px;top:785px;font-size:13.90px;color:#505050;transform-origin:0.56px 0;transform:scaleX(0.9870);">30</span>
<span class="t" style="left:1344.94px;top:785px;font-size:13.90px;color:#505050;transform-origin:0.56px 0;transform:scaleX(0.9870);">50</span>
<span class="t" style="left:1407.31px;top:785px;font-size:13.90px;color:#505050;transform-origin:0.70px 0;transform:scaleX(0.9967);">70</span>
</body></html>
